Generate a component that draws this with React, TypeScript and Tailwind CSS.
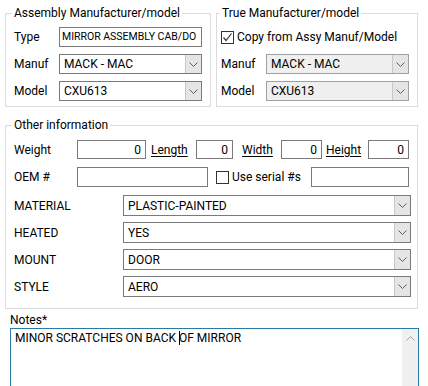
import type { ReactNode } from "react";

const FONT = "font-['Roboto','Liberation_Sans',sans-serif]";

function Chevron({ up = false, color = "#606060" }: { up?: boolean; color?: string }) {
  return (
    <svg width="9" height="5" viewBox="0 0 9 5" className={up ? "rotate-180" : ""}>
      <path d="M0.5 0.5 L4.5 4.5 L8.5 0.5" stroke={color} strokeWidth="1" fill="none" />
    </svg>
  );
}

function TextBox({ value = "", right = false, className = "" }: { value?: string; right?: boolean; className?: string }) {
  return (
    <div
      className={`flex min-w-0 items-center overflow-hidden border border-[#7a7a7a] bg-white leading-none ${
        right ? "justify-end" : ""
      } ${className}`}
    >
      <span className="whitespace-nowrap">{value}</span>
    </div>
  );
}

function Combo({ value, disabled = false, className = "" }: { value: string; disabled?: boolean; className?: string }) {
  return (
    <div
      className={`flex min-w-0 border ${disabled ? "border-[#a0a0a0] bg-[#f0f0f0]" : "border-[#7a7a7a] bg-white"} ${className}`}
    >
      <div className="flex min-w-0 flex-1 items-center overflow-hidden whitespace-nowrap px-[4px]">{value}</div>
      <div className="flex w-[16px] items-center justify-center border-l border-[#c8c8c8] bg-[#e5e5e5]">
        <Chevron />
      </div>
    </div>
  );
}

function Check({ checked = false }: { checked?: boolean }) {
  return (
    <div className="flex h-[13px] w-[13px] shrink-0 items-center justify-center border border-[#333333] bg-white">
      {checked && (
        <svg width="11" height="11" viewBox="0 0 11 11">
          <path d="M1.5 5.5 L4 8.5 L9.5 1.5" stroke="#333333" strokeWidth="1.2" fill="none" />
        </svg>
      )}
    </div>
  );
}

function Group({ title, children, className = "", inset = 8 }: { title: string; children: ReactNode; className?: string; inset?: number }) {
  return (
    <fieldset className={`min-w-0 border border-[#dcdcdc] ${className}`}>
      <legend className={`${inset === 8 ? "ml-[-2px]" : "ml-[-1px]"} whitespace-nowrap px-[2px] leading-[15px]`}>{title}</legend>
      {children}
    </fieldset>
  );
}

const U = ({ children }: { children: ReactNode }) => <span className="underline underline-offset-2">{children}</span>;

export default function App() {
  return (
    <div className={`h-[386px] w-[428px] overflow-hidden bg-white text-[12px] text-black ${FONT}`}>
      <div className="flex gap-[5px] pl-[5px] pr-[10px] pt-[6px]">
        <Group title="Assembly Manufacturer/model" className="w-[206px] shrink-0 px-[8px] pb-[5px] pt-[6px]">
          <div className="grid grid-cols-[45px_143px] items-center gap-y-[7px]">
            <span>Type</span>
            <TextBox value="MIRROR ASSEMBLY CAB/DO" className="h-[20px] px-[2px] text-[10.5px]" />
            <span>Manuf</span>
            <Combo value="MACK - MAC" className="h-[20px]" />
            <span>Model</span>
            <Combo value="CXU613" className="h-[20px]" />
          </div>
        </Group>
        <Group title="True Manufacturer/model" inset={4} className="flex-1 pb-[5px] pl-[4px] pr-[8px] pt-[6px]">
          <div className="grid grid-cols-[45px_143px] items-center gap-y-[7px]">
            <div className="col-span-2 flex h-[20px] items-center gap-[3px] whitespace-nowrap">
              <Check checked />
              <span>Copy from Assy Manuf/Model</span>
            </div>
            <span>Manuf</span>
            <Combo value="MACK - MAC" disabled className="h-[20px]" />
            <span>Model</span>
            <Combo value="CXU613" disabled className="h-[20px]" />
          </div>
        </Group>
      </div>

      <Group title="Other information" className="ml-[5px] mr-[10px] mt-[11px] pb-[11px] pl-[8px] pr-[6px] pt-[7px]">
        <div className="flex h-[19px] items-center">
          <span className="w-[63px]">Weight</span>
          <TextBox value="0" right className="h-full w-[69px] px-[4px]" />
          <span className="w-[50px] pl-[5px]">
            <U>Length</U>
          </span>
          <TextBox value="0" right className="h-full w-[37px] px-[4px]" />
          <span className="w-[48px] pl-[9px]">
            <U>Width</U>
          </span>
          <TextBox value="0" right className="h-full w-[41px] px-[4px]" />
          <span className="w-[46px] pl-[4px]">
            <U>Height</U>
          </span>
          <TextBox value="0" right className="h-full w-[41px] px-[4px]" />
        </div>
        <div className="mt-[8px] flex h-[20px] items-center">
          <span className="w-[63px]">OEM #</span>
          <TextBox className="h-full w-[131px]" />
          <div className="flex w-[103px] items-center gap-[3px] whitespace-nowrap pl-[8px]">
            <Check />
            <span>Use serial #s</span>
          </div>
          <TextBox className="h-full w-[98px]" />
        </div>
        <div className="mt-[8px] grid grid-cols-[109px_288px] items-center gap-y-[6px]">
          {[
            ["MATERIAL", "PLASTIC-PAINTED"],
            ["HEATED", "YES"],
            ["MOUNT", "DOOR"],
            ["STYLE", "AERO"],
          ].map(([label, value]) => (
            <div key={label} className="contents">
              <span>{label}</span>
              <Combo value={value} className="h-[21px]" />
            </div>
          ))}
        </div>
      </Group>

      <div className="ml-[10px] mt-[4px] leading-[15px]">Notes*</div>
      <div className="ml-[10px] flex h-[80px] w-[409px] border border-[#2a7aa3] bg-white">
        <div className="flex-1 whitespace-nowrap px-[4px] pt-[2px] leading-[15px]">
          MINOR SCRATCHES ON BACK{" "}
          <span className="mr-[-1px] inline-block h-[14px] w-px bg-black align-[-3px]" />
          OF MIRROR
        </div>
        <div className="flex w-[16px] justify-center bg-[#f0f0f0] pt-[7px]">
          <Chevron up color="#a0a0a0" />
        </div>
      </div>
    </div>
  );
}
